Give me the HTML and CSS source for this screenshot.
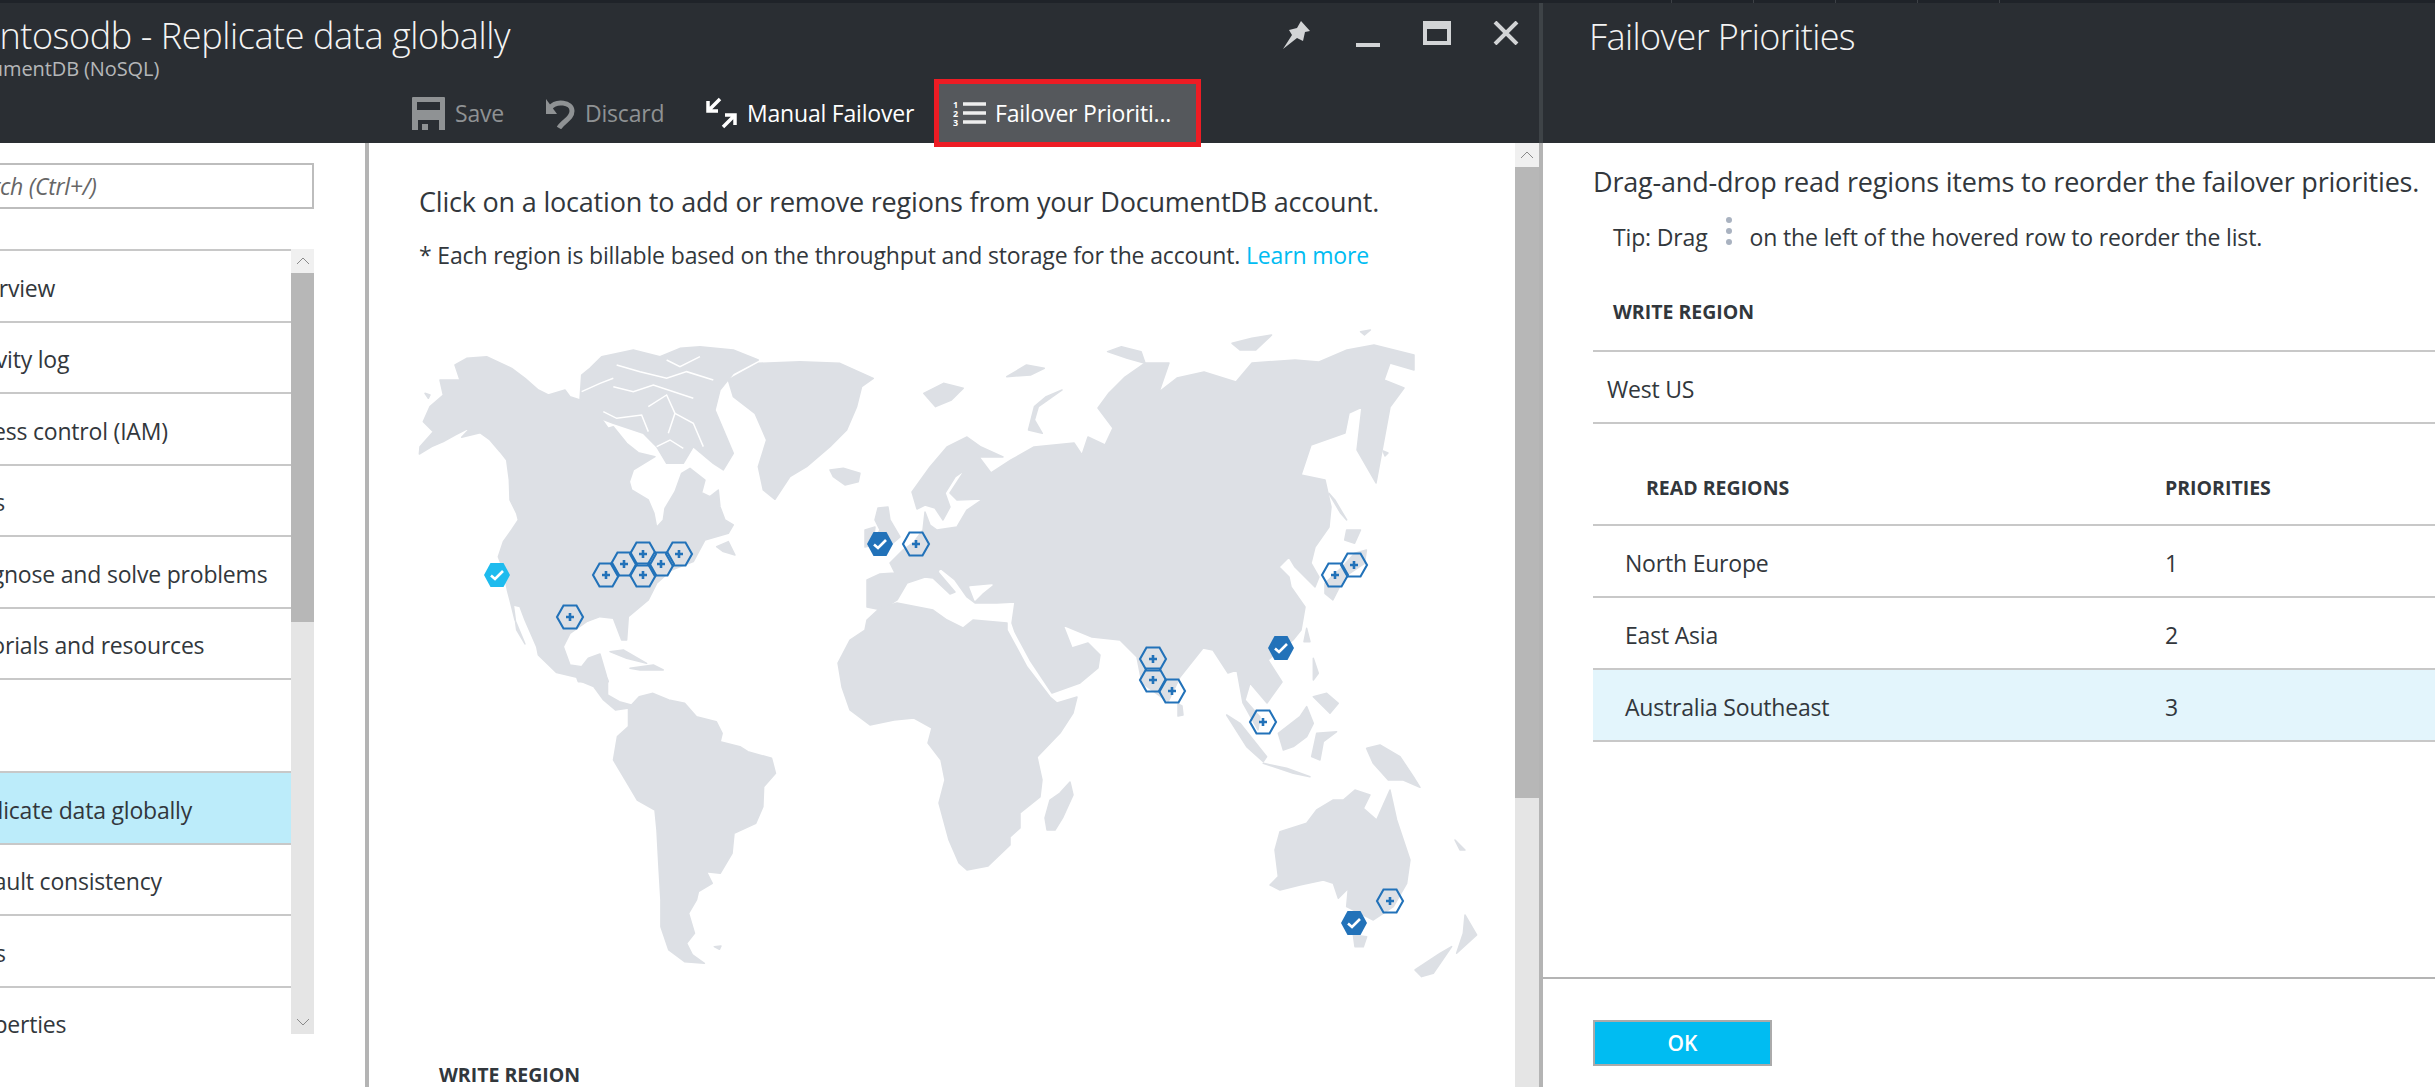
FILE: index.html
```html
<!DOCTYPE html>
<html lang="en">

<head>
    <meta charset="UTF-8">
    <title>contosodb - Replicate data globally</title>
    <link rel="stylesheet" href="styles.css">
</head>

<body>
    <div class="strip">
        <span></span><span></span><span></span><span></span><span></span>
    </div>

    <div class="blades">
        <!-- main blade -->
        <section class="blade-main">
            <header class="main-head">
                <div class="title-row">
                    <div class="titles">
                        <h1>contosodb - Replicate data globally</h1>
                        <p class="subtitle">DocumentDB (NoSQL)</p>
                    </div>
                    <div class="win-btns">
                        <svg class="pin" width="28" height="28" viewBox="0 0 28 28"><path d="M19 0 L28 10 L23 11 L21 20 L15 17 L1 28 L10 14 L7 9 L15 7 Z" /></svg>
                        <span class="win-min"></span>
                        <span class="win-max"></span>
                        <svg class="win-close" width="26" height="24" viewBox="0 0 26 24"><path d="M2 1 L24 23 M24 1 L2 23" /></svg>
                    </div>
                </div>
                <div class="toolbar">
                    <div class="tool tool-off tool-save">
                        <svg width="33" height="33" viewBox="0 0 33 33"><path fill-rule="evenodd" d="M1 0 H32 Q33 0 33 1 V33 H0 V1 Q0 0 1 0 Z M5 5 V13 H28 V5 Z M6 23 V33 H10 V27 H16 V33 H27 V23 Z" /></svg>
                        <span>Save</span>
                    </div>
                    <div class="tool tool-off tool-discard">
                        <svg width="30" height="32" viewBox="0 0 30 32"><path class="solid" d="M1 2 L12 17 H1 Z" /><path class="line" d="M5 11 C11 3 27 5 27 14 C27 22 18 24 14 31" /></svg>
                        <span>Discard</span>
                    </div>
                    <div class="tool tool-manual">
                        <svg width="31" height="32" viewBox="0 0 31 32"><path d="M2 4 V14 H12 M3 13 L14 2 M19 18 H29 V28 M28 19 L17 30" /></svg>
                        <span>Manual Failover</span>
                    </div>
                    <div class="tool tool-active">
                        <svg width="34" height="26" viewBox="0 0 34 26">
                            <text x="0" y="8">1</text><text x="0" y="17">2</text><text x="0" y="26">3</text>
                            <path d="M10 4 H33 M10 13 H33 M10 22 H33" />
                        </svg>
                        <span>Failover Prioriti...</span>
                    </div>
                </div>
            </header>

            <div class="main-body">
                <aside class="sidebar">
                    <div class="search">Search (Ctrl+/)</div>
                    <div class="menu">
                        <ul class="menu-list">
                            <li>Overview</li>
                            <li>Activity log</li>
                            <li>Access control (IAM)</li>
                            <li>Tags</li>
                            <li>Diagnose and solve problems</li>
                            <li>Tutorials and resources</li>
                            <li class="menu-gap"></li>
                            <li class="menu-on">Replicate data globally</li>
                            <li>Default consistency</li>
                            <li>Keys</li>
                            <li>Properties</li>
                        </ul>
                        <div class="scroll scroll-menu">
                            <div class="scroll-btn"><svg width="14" height="8" viewBox="0 0 14 8"><path d="M1 7 L7 1 L13 7" /></svg></div>
                            <div class="scroll-thumb"></div>
                            <div class="scroll-rest"><svg width="14" height="8" viewBox="0 0 14 8"><path d="M1 1 L7 7 L13 1" /></svg></div>
                        </div>
                    </div>
                </aside>

                <main class="content">
                    <div class="content-main">
                        <p class="intro">Click on a location to add or remove regions from your DocumentDB account.</p>
                        <p class="note">* Each region is billable based on the throughput and storage for the account. <a href="#">Learn more</a></p>

                        <svg class="map" width="1146" height="720" viewBox="369 290 1146 720">
                            <defs>
                                <g id="hex-plus">
                                    <path class="hex-line" d="M-13 0 L-6.5 -11.5 H6.5 L13 0 L6.5 11.5 H-6.5 Z" />
                                    <path class="hex-cross" d="M-4 0 H4 M0 -4 V4" />
                                </g>
                                <g id="hex-dark">
                                    <path class="hex-dark" d="M-13 0 L-6.5 -12 H6.5 L13 0 L6.5 12 H-6.5 Z" />
                                    <path class="hex-tick" d="M-6 0.5 L-2 4 L6 -4" />
                                </g>
                                <g id="hex-light">
                                    <path class="hex-light" d="M-13 0 L-6.5 -12 H6.5 L13 0 L6.5 12 H-6.5 Z" />
                                    <path class="hex-tick" d="M-6 0.5 L-2 4 L6 -4" />
                                </g>
                            </defs>

                            <g class="land">
                                <!-- the americas north, greenland, arctic -->
                                <g transform="translate(400,300) scale(.3333)">
                                    <polygon points="58,462 95,440 130,425 165,405 215,380 185,412 240,398 270,420 300,455 320,480 328,540 330,600 350,640 355,660 335,690 310,725 295,770 310,810 322,870 330,900 345,960 375,1032 350,990 340,915 360,920 375,960 410,1040 415,1065 470,1118 530,1132 535,1145 625,1145 620,1130 600,1062 565,1075 545,1100 510,1095 490,1040 510,1000 560,965 600,950 640,955 665,1020 680,1020 685,950 745,900 770,850 815,810 880,785 915,720 985,700 1000,675 975,660 960,620 955,570 930,590 905,578 915,540 870,505 845,520 825,575 795,625 790,660 770,682 762,640 745,600 695,570 688,545 700,510 765,470 715,458 680,430 640,380 625,385 600,350 575,345 540,300 510,290 495,270 445,285 415,270 375,235 335,205 260,170 200,175 165,195 180,240 120,240 130,285 90,320 70,365 100,395 60,440" />
                                    <polygon points="545,225 570,205 605,170 700,150 780,170 840,145 900,140 1000,150 1075,180 1000,220 960,270 945,330 1000,460 970,510 940,490 880,440 850,490 800,490 770,440 730,400 640,370 575,345 540,300" />
                                    <polyline class="strait" points="545,275 600,250 640,235" />
                                    <polyline class="strait" points="640,260 700,275 760,255 880,295" />
                                    <polyline class="strait" points="610,335 650,355 725,345 745,395" />
                                    <polyline class="strait" points="745,320 800,285 825,340 805,400" />
                                    <polyline class="strait" points="825,340 880,370 910,440" />
                                    <polyline class="strait" points="650,195 720,215 800,235 860,215 940,240" />
                                    <polyline class="strait" points="800,180 840,200 900,170" />
                                    <polyline class="strait" points="770,440 810,420 850,445" />
                                    <polygon points="985,240 1075,190 1200,185 1320,190 1420,235 1385,260 1370,320 1340,390 1290,440 1220,500 1170,530 1125,598 1090,570 1075,500 1100,420 1065,340 1000,290" />
                                    <polygon points="1290,510 1330,505 1380,520 1375,545 1335,555 1300,530" />
                                    <polygon points="950,740 985,725 1005,765 970,755" />
                                    <polygon points="630,1055 670,1050 740,1090 680,1075" />
                                    <polygon points="690,1105 760,1095 790,1110 720,1110" />
                                    <polygon points="75,280 90,285 85,295" />
                                </g>
                                <!-- central and south america -->
                                <g transform="translate(400,680) scale(.3953,.3333)">
                                    <polygon points="450,0 490,20 515,60 545,90 575,85 585,75 555,65 525,45 525,0" />
                                    <polygon points="578,85 605,50 640,40 680,60 720,70 750,110 800,125 815,160 810,185 860,200 880,215 940,235 950,280 920,320 918,380 900,430 845,460 840,520 810,580 775,575 790,610 755,635 750,660 730,700 745,760 725,790 740,825 770,850 720,845 680,810 660,740 660,660 655,560 650,450 645,390 600,360 570,300 540,240 550,170 578,140" />
                                    <polygon points="795,800 812,798 808,808" />
                                </g>
                                <!-- eurasia, page coordinates -->
                                <polygon points="867,580 880,574 895,573 890,563 903,550 914,542 923,530 925,512 930,525 937,530 957,527 967,510 983,499 957,500 950,493 965,470 955,477 945,493 950,507 943,520 935,508 925,505 917,509 912,492 930,467 947,447 967,437 981,447 1003,457 979,457 991,473 1011,460 1034,447 1074,443 1082,455 1088,437 1105,445 1113,428 1098,408 1109,393 1125,377 1145,363 1169,363 1159,392 1177,378 1204,372 1236,382 1252,363 1295,360 1319,362 1347,350 1374,345 1414,355 1414,370 1390,363 1384,380 1404,388 1390,407 1376,483 1357,450 1362,407 1349,413 1345,433 1311,445 1301,475 1325,480 1331,507 1329,527 1315,547 1311,563 1319,577 1315,587 1295,567 1289,557 1279,567 1289,577 1291,587 1305,607 1301,630 1293,640 1268,660 1282,682 1267,703 1250,683 1245,700 1260,717 1258,730 1243,703 1237,670 1228,673 1213,650 1203,648 1180,677 1168,702 1142,683 1137,657 1120,640 1092,637 1063,625 1072,648 1088,643 1100,655 1098,668 1080,683 1052,693 1030,660 1015,632 1012,623 1015,602 997,603 975,603 967,597 955,580 940,568 938,572 955,592 950,594 933,578 925,577 907,583 897,600 882,610 867,607" />
                                <polygon class="sea" points="970,587 992,585 982,593 975,600" />
                                <polygon points="878,508 888,507 890,520 900,537 893,543 880,550 870,547 880,530 875,520" />
                                <polygon points="865,530 875,527 873,545 865,547" />
                                <polygon points="1178,704 1182,706 1183,715 1178,716" />
                                <polygon points="1383,451 1388,453 1385,456" />
                                <!-- russian arctic -->
                                <g transform="translate(900,300) scale(.3953,.3333)">
                                    <polygon points="60,280 110,250 160,265 130,300 90,320" />
                                    <polygon points="410,270 370,290 340,320 325,390 360,400 340,360 350,320" />
                                    <polygon points="270,230 320,195 365,205 330,225" />
                                    <polygon points="525,155 560,140 610,155 620,190 575,175" />
                                    <polygon points="840,130 890,115 940,105 900,150 860,150" />
                                    <polygon points="1165,95 1190,90 1175,105" />
                                    <polygon points="1130,690 1165,690 1150,730 1125,720" />
                                    <polygon points="1150,760 1180,750 1175,790 1125,830 1095,900 1075,880 1075,850 1120,800" />
                                    <polygon points="1085,580 1100,600 1130,660 1115,640" />
                                </g>
                                <!-- africa -->
                                <polygon points="933,610 947,620 963,628 973,620 1007,623 1007,630 1027,667 1050,697 1057,703 1077,697 1073,713 1060,733 1037,757 1042,780 1040,797 1020,813 1020,828 1010,837 1010,845 988,866 967,870 959,863 949,840 939,803 945,780 941,760 928,743 932,728 914,718 894,720 870,725 850,710 842,687 838,663 850,640 865,630 867,620 880,608 897,603" />
                                <polygon points="1070,782 1073,795 1063,817 1055,830 1047,830 1045,818 1050,800 1060,793" />
                                <!-- south east asia -->
                                <g transform="translate(1080,560) scale(.3333)">
                                    <polygon points="595,520 660,470 680,440 700,490 680,530 640,560 610,570" />
                                    <polygon points="440,465 480,490 560,590 550,605 500,560" />
                                    <polygon points="550,610 620,625 690,650 640,640" />
                                    <polygon points="710,520 770,515 730,545 720,600 695,590" />
                                    <polygon points="700,295 715,340 700,360" />
                                    <polygon points="740,400 775,430 750,460 700,410" />
                                    <polygon points="680,205 690,245 672,245" />
                                </g>
                                <!-- oceania -->
                                <g transform="translate(1200,680) scale(.3333)">
                                    <polygon points="210,615 235,590 225,510 240,455 320,430 350,390 400,360 430,360 465,330 510,345 490,385 530,420 570,330 590,420 630,540 620,610 580,680 520,720 480,700 440,680 445,625 415,655 400,610 370,600 300,615 240,630" />
                                    <polygon points="460,765 500,770 490,800 465,800" />
                                    <polygon points="795,705 830,765 770,820 790,760" />
                                    <polygon points="755,800 700,880 665,890 645,870 720,820" />
                                    <polygon points="500,205 540,195 600,230 640,290 660,322 610,300 565,300 520,250" />
                                    <polygon points="765,480 795,510 780,510" />
                                </g>
                            </g>

                            <use href="#hex-light" x="497" y="575" />
                            <use href="#hex-plus" x="606" y="575" />
                            <use href="#hex-plus" x="624" y="564" />
                            <use href="#hex-plus" x="643" y="554" />
                            <use href="#hex-plus" x="643" y="575" />
                            <use href="#hex-plus" x="661" y="564" />
                            <use href="#hex-plus" x="679" y="554" />
                            <use href="#hex-plus" x="570" y="617" />
                            <use href="#hex-dark" x="880" y="544" />
                            <use href="#hex-plus" x="916" y="544" />
                            <use href="#hex-dark" x="1281" y="648" />
                            <use href="#hex-plus" x="1153" y="659" />
                            <use href="#hex-plus" x="1153" y="680" />
                            <use href="#hex-plus" x="1172" y="691" />
                            <use href="#hex-plus" x="1263" y="722" />
                            <use href="#hex-plus" x="1335" y="575" />
                            <use href="#hex-plus" x="1354" y="565" />
                            <use href="#hex-plus" x="1390" y="901" />
                            <use href="#hex-dark" x="1354" y="923" />
                        </svg>

                        <h3 class="write-head">WRITE REGION</h3>
                    </div>
                    <div class="scroll scroll-main">
                        <div class="scroll-btn"><svg width="14" height="8" viewBox="0 0 14 8"><path d="M1 7 L7 1 L13 7" /></svg></div>
                        <div class="scroll-thumb"></div>
                        <div class="scroll-rest"></div>
                    </div>
                </main>
            </div>
        </section>

        <!-- priorities blade -->
        <section class="blade-side">
            <header class="side-head">
                <h2>Failover Priorities</h2>
            </header>
            <div class="side-body">
                <div class="side-main">
                    <p class="intro">Drag-and-drop read regions items to reorder the failover priorities.</p>
                    <div class="tip">
                        <span>Tip: Drag</span>
                        <svg class="dots" width="8" height="28" viewBox="0 0 8 28"><circle cx="4" cy="3" r="3" /><circle cx="4" cy="14" r="3" /><circle cx="4" cy="25" r="3" /></svg>
                        <span>on the left of the hovered row to reorder the list.</span>
                    </div>
                    <div class="write-title">WRITE REGION</div>
                    <div class="write-row">West US</div>
                    <div class="read-grid read-title">
                        <span>READ REGIONS</span>
                        <span>PRIORITIES</span>
                    </div>
                    <div class="read-grid read-row"><span>North Europe</span><span>1</span></div>
                    <div class="read-grid read-row"><span>East Asia</span><span>2</span></div>
                    <div class="read-grid read-row read-hover"><span>Australia Southeast</span><span>3</span></div>
                </div>
                <footer class="side-foot">
                    <button class="ok-btn">OK</button>
                </footer>
            </div>
        </section>
    </div>
</body>

</html>
```
FILE: styles.css
```css
* {
    box-sizing: border-box;
}

html,
body {
    height: 100%;
}

body {
    margin: 0;
    overflow: hidden;
    display: flex;
    flex-direction: column;
    font-family: "Open Sans", "Noto Sans", sans-serif;
    font-size: 23px;
    color: #32373c;
    background-color: #fff;
}

.strip {
    height: 3px;
    display: flex;
    padding-left: 1590px;
    background-color: #1f2329;
}

.strip span {
    width: 82px;
    border-right: 1px solid #3d4146;
}

.blades {
    flex: 1;
    display: flex;
    min-height: 0;
}

/* main blade */

.blade-main {
    width: 1543px;
    display: flex;
    flex-direction: column;
    overflow: hidden;
}

.main-head {
    height: 140px;
    flex-shrink: 0;
    display: flex;
    flex-direction: column;
    background-color: #2a2e33;
    border-right: 4px solid #3e4347;
    color: #fff;
}

.title-row {
    height: 76px;
    flex-shrink: 0;
    display: flex;
    justify-content: space-between;
}

.titles {
    margin-left: -38px;
    padding-top: 12px;
}

.titles h1 {
    margin: 0;
    font-size: 36px;
    line-height: 42px;
    font-weight: 300;
    letter-spacing: -.4px;
    color: #f4f4f4;
    white-space: nowrap;
}

.subtitle {
    margin: 0 0 0 -7px;
    font-size: 20px;
    line-height: 24px;
    letter-spacing: -.1px;
    color: #b5b7b9;
    white-space: nowrap;
}

.win-btns {
    display: flex;
    align-items: flex-start;
    padding-top: 18px;
    padding-right: 20px;
}

.pin {
    fill: #d2d4d6;
    margin-right: 46px;
}

.win-min {
    width: 24px;
    height: 4px;
    margin-top: 22px;
    margin-right: 43px;
    background-color: #d2d4d6;
}

.win-max {
    width: 28px;
    height: 24px;
    border: 4px solid #d2d4d6;
    border-top-width: 8px;
    margin-right: 42px;
}

.win-close {
    fill: none;
    stroke: #d2d4d6;
    stroke-width: 4;
}

.toolbar {
    display: flex;
    padding-left: 412px;
    position: relative;
    z-index: 2;
}

.tool {
    display: flex;
    align-items: center;
    height: 68px;
    font-size: 23px;
    letter-spacing: -.2px;
    white-space: nowrap;
}

.tool svg {
    margin-right: 10px;
    flex-shrink: 0;
}

.tool-off {
    color: #8f9294;
}

.tool-off svg {
    fill: #8f9294;
}

.tool-save {
    width: 133px;
}

.tool-discard {
    width: 161px;
}

.tool-discard .solid {
    fill: #8f9294;
}

.tool-discard .line {
    fill: none;
    stroke: #8f9294;
    stroke-width: 5;
}

.tool-manual {
    width: 228px;
}

.tool-manual svg path {
    fill: none;
    stroke: #fff;
    stroke-width: 3.5;
}

.tool-active {
    width: 267px;
    padding-left: 14px;
    background-color: #55585c;
    border: 5px solid #ed1c24;
}

.tool-active svg {
    margin-right: 8px;
}

.tool-active svg text {
    font-size: 9px;
    font-weight: 700;
    fill: #fff;
}

.tool-active svg path {
    stroke: #eee;
    stroke-width: 3.5;
    fill: none;
}

.main-body {
    flex: 1;
    display: flex;
    min-height: 0;
}

/* left menu */

.sidebar {
    width: 369px;
    flex-shrink: 0;
    padding-top: 20px;
    border-right: 4px solid #b4b4b4;
    overflow: hidden;
}

.search {
    width: 374px;
    height: 46px;
    margin-left: -60px;
    padding-left: 14px;
    line-height: 42px;
    font-style: italic;
    color: #666;
    border: 2px solid #bdbdbd;
    letter-spacing: -.3px;
}

.menu {
    width: 314px;
    height: 785px;
    margin-top: 40px;
    display: flex;
    overflow: hidden;
}

.menu-list {
    flex: 1;
    margin: 0;
    padding: 0;
    list-style: none;
    min-width: 0;
}

.menu-list li {
    height: 71.5px;
    padding-top: 4px;
    text-indent: -43px;
    display: flex;
    align-items: center;
    white-space: nowrap;
    border-top: 2px solid #c8c8c8;
    letter-spacing: -.2px;
}

.menu-list .menu-gap {
    height: 93px;
}

.menu-list .menu-on {
    background-color: #bcecfa;
}

.scroll {
    width: 23px;
    flex-shrink: 0;
    display: flex;
    flex-direction: column;
    background-color: #e5e5e5;
}

.scroll-btn {
    height: 24px;
    flex-shrink: 0;
    display: flex;
    align-items: center;
    justify-content: center;
    background-color: #f0f0f0;
}

.scroll svg {
    fill: none;
    stroke: #8a8a8a;
    stroke-width: 1;
}

.scroll-thumb {
    background-color: #b7b7b7;
}

.scroll-rest {
    flex: 1;
    display: flex;
    align-items: flex-end;
    justify-content: center;
    padding-bottom: 8px;
}

.scroll-menu .scroll-thumb {
    height: 349px;
}

/* center pane */

.content {
    flex: 1;
    display: flex;
    min-width: 0;
    border-right: 4px solid #b4b4b4;
}

.content-main {
    flex: 1;
    min-width: 0;
    padding-top: 44px;
}

.intro {
    margin: 0 0 0 50px;
    font-size: 27px;
    line-height: 30px;
    white-space: nowrap;
    letter-spacing: -.2px;
}

.note {
    margin: 23px 0 0 50px;
    font-size: 23px;
    line-height: 30px;
    white-space: nowrap;
    letter-spacing: -.15px;
}

.note a {
    color: #00bcf2;
    text-decoration: none;
}

.map {
    display: block;
    margin-top: 20px;
}

.land polygon {
    fill: #dde0e5;
    stroke: #dde0e5;
    stroke-width: 1.5;
    stroke-linejoin: round;
    vector-effect: non-scaling-stroke;
}

.land .strait {
    fill: none;
    stroke: #fff;
    stroke-width: 1.5;
    vector-effect: non-scaling-stroke;
}

.land .sea {
    fill: #fff;
    stroke: #fff;
}

.hex-line {
    fill: none;
    stroke: #2272b9;
    stroke-width: 2.1;
}

.hex-cross {
    fill: none;
    stroke: #2272b9;
    stroke-width: 2.6;
}

.hex-dark {
    fill: #2272b9;
}

.hex-light {
    fill: #1ebbee;
}

.hex-tick {
    fill: none;
    stroke: #fff;
    stroke-width: 2.6;
}

.write-head {
    margin: 54px 0 0 70px;
    font-size: 19.5px;
    line-height: 22px;
    font-weight: 700;
}

.scroll-main {
    width: 24px;
}

.scroll-main .scroll-thumb {
    height: 631px;
}

/* priorities blade */

.blade-side {
    flex: 1;
    display: flex;
    flex-direction: column;
    min-width: 0;
}

.side-head {
    height: 140px;
    flex-shrink: 0;
    padding-top: 13px;
    padding-left: 46px;
    background-color: #2a2e33;
}

.side-head h2 {
    margin: 0;
    font-size: 36px;
    line-height: 42px;
    font-weight: 300;
    letter-spacing: -.6px;
    color: #f4f4f4;
}

.side-body {
    flex: 1;
    display: flex;
    flex-direction: column;
    min-height: 0;
}

.side-main {
    flex: 1;
    padding-top: 24px;
    padding-left: 50px;
}

.side-main .intro {
    margin-left: 0;
}

.tip {
    height: 30px;
    margin-top: 25px;
    padding-left: 20px;
    display: flex;
    align-items: center;
    gap: 17px;
    letter-spacing: -.15px;
}

.dots {
    fill: #a9b2c0;
    margin-top: -12px;
}

.write-title {
    height: 100px;
    padding-top: 48px;
    padding-left: 20px;
    line-height: 24px;
    font-size: 19.5px;
    font-weight: 700;
    border-bottom: 2px solid #c8c8c8;
}

.write-row {
    height: 72px;
    padding-top: 4px;
    padding-left: 14px;
    display: flex;
    align-items: center;
    border-bottom: 2px solid #c8c8c8;
    letter-spacing: -.2px;
}

.read-grid {
    display: grid;
    grid-template-columns: 572px 1fr;
    align-items: center;
}

.read-title {
    height: 102px;
    padding-top: 26px;
    font-size: 19.5px;
    font-weight: 700;
    border-bottom: 2px solid #c8c8c8;
}

.read-title span:first-child {
    padding-left: 53px;
}

.read-row {
    height: 72px;
    padding-top: 4px;
    border-bottom: 2px solid #c8c8c8;
    letter-spacing: -.2px;
}

.read-row span:first-child {
    padding-left: 32px;
}

.read-hover {
    background-color: #e3f5fc;
}

.side-foot {
    height: 110px;
    flex-shrink: 0;
    padding-top: 41px;
    padding-left: 50px;
    border-top: 2px solid #b4b4b4;
}

.ok-btn {
    width: 179px;
    height: 46px;
    padding: 0;
    font-family: inherit;
    font-size: 21px;
    font-weight: 600;
    color: #fff;
    background-color: #00bcf2;
    border: 2px solid #aaa;
}
```
